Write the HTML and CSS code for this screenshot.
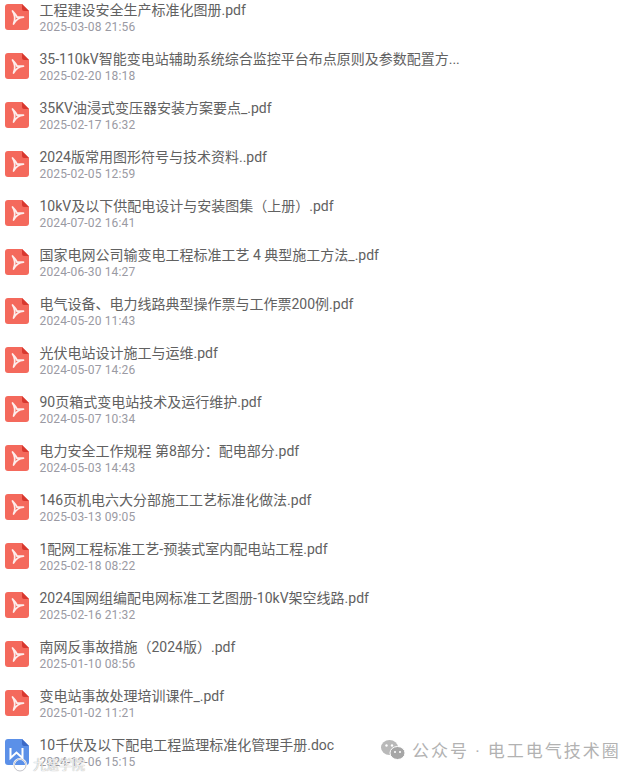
FILE: index.html
```html
<!DOCTYPE html>
<html lang="zh-CN">
<head>
    <meta charset="UTF-8">
    <title>文件列表</title>
    <link rel="stylesheet" href="styles.css">
</head>
<body>
    <svg class="sprites" width="0" height="0">
        <symbol id="icon-pdf" viewBox="0 0 24 26">
            <path d="M3 0H17L24 7V23a3 3 0 0 1-3 3H3a3 3 0 0 1-3-3V3a3 3 0 0 1 3-3Z" fill="#f4695c"/>
            <path d="M17 0L24 7H19a2 2 0 0 1-2-2Z" fill="#d8382f"/>
            <path d="M7.500 7C10 9.500 11.500 11 12 13.200H18.500C15 13.500 11.500 15 8.500 20C10.500 15.500 10.500 11.500 7.500 7Z" fill="none" stroke="#fdeeec" stroke-width="1.700" stroke-linejoin="round"/>
        </symbol>
        <symbol id="icon-doc" viewBox="0 0 24 26">
            <path d="M3 0H17L24 7V23a3 3 0 0 1-3 3H3a3 3 0 0 1-3-3V3a3 3 0 0 1 3-3Z" fill="#5b90e8"/>
            <path d="M17 0L24 7H19a2 2 0 0 1-2-2Z" fill="#3b69c6"/>
            <path d="M5.500 9V19L11.500 13.500L17.500 19V9" fill="none" stroke="#fff" stroke-width="2"/>
        </symbol>
    </svg>

    <ul class="file-list">
        <li class="file-row">
            <svg class="file-icon"><use href="#icon-pdf"/></svg>
            <div class="file-info"><div class="file-name">工程建设安全生产标准化图册.pdf</div><div class="file-date">2025-03-08 21:56</div></div>
        </li>
        <li class="file-row">
            <svg class="file-icon"><use href="#icon-pdf"/></svg>
            <div class="file-info"><div class="file-name">35-110kV智能变电站辅助系统综合监控平台布点原则及参数配置方...</div><div class="file-date">2025-02-20 18:18</div></div>
        </li>
        <li class="file-row">
            <svg class="file-icon"><use href="#icon-pdf"/></svg>
            <div class="file-info"><div class="file-name">35KV油浸式变压器安装方案要点_.pdf</div><div class="file-date">2025-02-17 16:32</div></div>
        </li>
        <li class="file-row">
            <svg class="file-icon"><use href="#icon-pdf"/></svg>
            <div class="file-info"><div class="file-name">2024版常用图形符号与技术资料..pdf</div><div class="file-date">2025-02-05 12:59</div></div>
        </li>
        <li class="file-row">
            <svg class="file-icon"><use href="#icon-pdf"/></svg>
            <div class="file-info"><div class="file-name">10kV及以下供配电设计与安装图集（上册）.pdf</div><div class="file-date">2024-07-02 16:41</div></div>
        </li>
        <li class="file-row">
            <svg class="file-icon"><use href="#icon-pdf"/></svg>
            <div class="file-info"><div class="file-name">国家电网公司输变电工程标准工艺 4 典型施工方法_.pdf</div><div class="file-date">2024-06-30 14:27</div></div>
        </li>
        <li class="file-row">
            <svg class="file-icon"><use href="#icon-pdf"/></svg>
            <div class="file-info"><div class="file-name">电气设备、电力线路典型操作票与工作票200例.pdf</div><div class="file-date">2024-05-20 11:43</div></div>
        </li>
        <li class="file-row">
            <svg class="file-icon"><use href="#icon-pdf"/></svg>
            <div class="file-info"><div class="file-name">光伏电站设计施工与运维.pdf</div><div class="file-date">2024-05-07 14:26</div></div>
        </li>
        <li class="file-row">
            <svg class="file-icon"><use href="#icon-pdf"/></svg>
            <div class="file-info"><div class="file-name">90页箱式变电站技术及运行维护.pdf</div><div class="file-date">2024-05-07 10:34</div></div>
        </li>
        <li class="file-row">
            <svg class="file-icon"><use href="#icon-pdf"/></svg>
            <div class="file-info"><div class="file-name">电力安全工作规程 第8部分：配电部分.pdf</div><div class="file-date">2024-05-03 14:43</div></div>
        </li>
        <li class="file-row">
            <svg class="file-icon"><use href="#icon-pdf"/></svg>
            <div class="file-info"><div class="file-name">146页机电六大分部施工工艺标准化做法.pdf</div><div class="file-date">2025-03-13 09:05</div></div>
        </li>
        <li class="file-row">
            <svg class="file-icon"><use href="#icon-pdf"/></svg>
            <div class="file-info"><div class="file-name">1配网工程标准工艺-预装式室内配电站工程.pdf</div><div class="file-date">2025-02-18 08:22</div></div>
        </li>
        <li class="file-row">
            <svg class="file-icon"><use href="#icon-pdf"/></svg>
            <div class="file-info"><div class="file-name">2024国网组编配电网标准工艺图册-10kV架空线路.pdf</div><div class="file-date">2025-02-16 21:32</div></div>
        </li>
        <li class="file-row">
            <svg class="file-icon"><use href="#icon-pdf"/></svg>
            <div class="file-info"><div class="file-name">南网反事故措施（2024版）.pdf</div><div class="file-date">2025-01-10 08:56</div></div>
        </li>
        <li class="file-row">
            <svg class="file-icon"><use href="#icon-pdf"/></svg>
            <div class="file-info"><div class="file-name">变电站事故处理培训课件_.pdf</div><div class="file-date">2025-01-02 11:21</div></div>
        </li>
        <li class="file-row">
            <svg class="file-icon"><use href="#icon-doc"/></svg>
            <div class="file-info"><div class="file-name">10千伏及以下配电工程监理标准化管理手册.doc</div><div class="file-date">2024-12-06 15:15</div></div>
        </li>
    </ul>

    <!-- 水印 -->
    <div class="mark-left">
        <svg class="mark-left-icon" viewBox="0 0 16 16"><circle cx="8" cy="8" r="6" fill="none" stroke="#fff" stroke-width="2"/><circle cx="8" cy="8" r="6" fill="none" stroke="#9a9aa5" stroke-width="0.600"/></svg>
        <span class="mark-left-text">九速学院</span>
    </div>
    <div class="mark-right">
        <svg class="mark-wechat" viewBox="0 0 24 20">
            <ellipse cx="8.500" cy="7.500" rx="8.500" ry="7.500" fill="#b9b9b9"/>
            <ellipse cx="16.500" cy="13" rx="7.500" ry="6.500" fill="#a6a6a6" stroke="#fff" stroke-width="1"/>
            <circle cx="5.500" cy="5.500" r="1.200" fill="#fff"/>
            <circle cx="11" cy="5.500" r="1.200" fill="#fff"/>
            <circle cx="14" cy="12" r="1" fill="#fff"/>
            <circle cx="19" cy="12" r="1" fill="#fff"/>
        </svg>
        <span class="mark-right-text">公众号 · 电工电气技术圈</span>
    </div>
</body>
</html>
```

FILE: styles.css
```css
* {
    box-sizing: border-box;
    margin: 0;
    padding: 0;
}

body {
    position: relative;
    height: 777px;
    overflow: hidden;
    background: #fff;
    font-family: Roboto, "Noto Sans CJK SC", sans-serif;
}

.sprites {
    position: absolute;
}

.file-list {
    list-style: none;
    padding: 0 0 0 5px;
}

.file-row {
    display: flex;
    align-items: flex-start;
    height: 49px;
    gap: 10.500px;
    padding-top: 4px;
}

.file-icon {
    flex: none;
    width: 24px;
    height: 26px;
}

.file-info {
    margin-top: -3px;
}

.file-name {
    font-size: 14px;
    line-height: 19px;
    color: #616161;
    white-space: nowrap;
}

.file-date {
    font-size: 12px;
    line-height: 17px;
    margin-top: -1px;
    color: #9a9aa3;
    letter-spacing: 0.150px;
}

.mark-left {
    position: absolute;
    left: 12px;
    top: 757px;
    display: flex;
    align-items: center;
    gap: 5px;
}

.mark-left-icon {
    width: 16px;
    height: 16px;
}

.mark-left-text {
    font-size: 13px;
    line-height: 16px;
    color: rgba(255, 255, 255, 0.85);
    text-shadow: 0 0 1px #888;
}

.mark-right {
    position: absolute;
    left: 381px;
    top: 740px;
    display: flex;
    align-items: flex-start;
    gap: 7px;
}

.mark-right-text {
    font-size: 17px;
    line-height: 23px;
    letter-spacing: 2px;
    white-space: nowrap;
    color: #b2b2b2;
}

.mark-wechat {
    width: 24px;
    height: 20px;
}
```
